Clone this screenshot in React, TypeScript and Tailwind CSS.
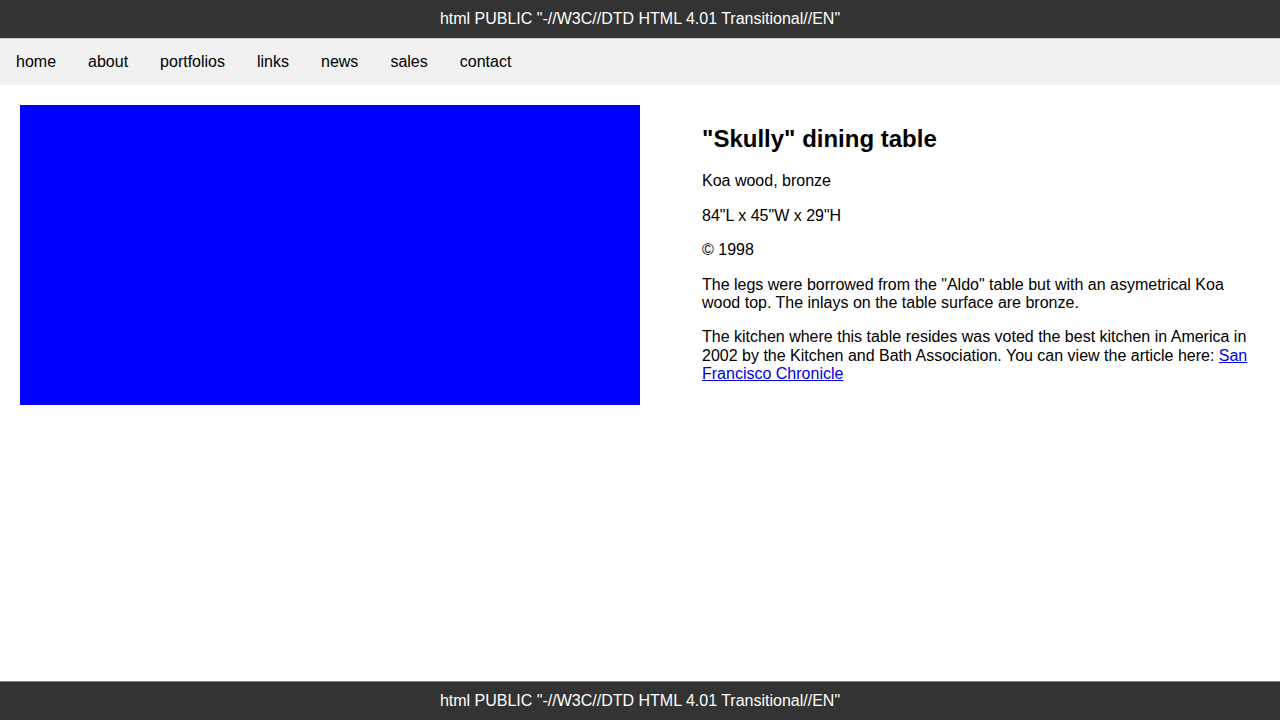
import React from "react";

export default function App() {
  const nav = ["home", "about", "portfolios", "links", "news", "sales", "contact"];
  return (
    <div className="min-h-[720px] bg-white text-black font-['Liberation_Sans',Arial,sans-serif] text-[16px] leading-[1.15]">
      <header className="bg-[#333333] text-white text-center py-[10px] leading-[18px] border-b border-[#cccccc]">
        html PUBLIC "-//W3C//DTD HTML 4.01 Transitional//EN"
      </header>
      <nav className="bg-[#f1f1f1] flex">
        {nav.map((n) => (
          <a key={n} className="px-[16px] py-[14px] leading-[18px] text-black">
            {n}
          </a>
        ))}
      </nav>
      <main className="flex p-[20px]">
        <div className="w-[620px] shrink-0">
          <div className="w-[620px] h-[300px] bg-[#0000ff]" />
        </div>
        <div className="flex-1 pl-[62px]">
          <h2 className="text-[24px] font-bold leading-[1.15] mt-[19.92px] mb-[19.92px]">"Skully" dining table</h2>
          <p className="my-[16px]">Koa wood, bronze</p>
          <p className="my-[16px]">84"L x 45"W x 29"H</p>
          <p className="my-[16px]">© 1998</p>
          <p className="my-[16px]">
            The legs were borrowed from the "Aldo" table but with an asymetrical Koa wood top. The inlays on the table surface are bronze.
          </p>
          <p className="my-[16px]">
            The kitchen where this table resides was voted the best kitchen in America in 2002 by the Kitchen and Bath Association. You can view the article here:{" "}
            <a className="text-[#0000ee] underline" href="#">San Francisco Chronicle</a>
          </p>
        </div>
      </main>
      <footer className="fixed bottom-0 left-0 right-0 bg-[#333333] text-white text-center py-[10px] leading-[18px] border-t border-[#888888]">
        html PUBLIC "-//W3C//DTD HTML 4.01 Transitional//EN"
      </footer>
    </div>
  );
}
